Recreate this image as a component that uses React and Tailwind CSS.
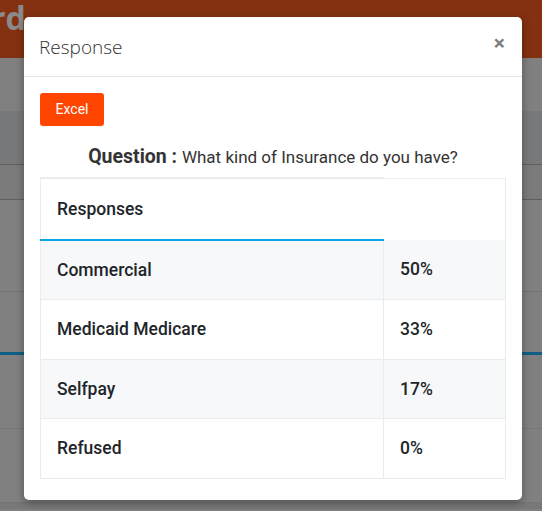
import React from 'react';

const rows = [
    { label: 'Commercial', value: '50%' },
    { label: 'Medicaid Medicare', value: '33%' },
    { label: 'Selfpay', value: '17%' },
    { label: 'Refused', value: '0%' },
];

export default function App() {
    return (
        <div className="relative w-[542px] h-[511px] overflow-hidden bg-[#808080] font-['Roboto',sans-serif]">
            {/* page behind the backdrop */}
            <div className="h-[58px] bg-[#833110] overflow-hidden">
                <div className="-ml-[9px] mt-[2px] text-[32px] font-bold text-[#8a8a8a] leading-none font-['Open_Sans',sans-serif] whitespace-nowrap">rd</div>
            </div>
            <div className="h-[53px]" />
            <div className="h-[54px] bg-[#77787a] border-b border-[#5f5f5f]" />
            <div className="h-[35px] bg-[#7b7b7b] border-b border-[#5f5f5f]" />
            <div className="h-[92px] border-b border-[#747474]" />
            <div className="h-[60px]" />
            <div className="h-[3px] bg-[#0f5f86]" />
            <div className="h-[74px] border-b border-[#777777]" />
            <div className="h-[74px] border-b border-[#747474]" />
            <div className="h-[6px] bg-[#787878]" />

            {/* modal */}
            <div className="absolute left-[24px] top-[17px] w-[498px] h-[483px] bg-white rounded-[5px] shadow-[0_3px_9px_rgba(0,0,0,0.35)]">
                <div className="h-[60px] flex items-center justify-between px-[15px] border-b border-[#e5e5e5]">
                    <h4 className="text-[19px] font-light text-[#333] font-['Open_Sans',sans-serif] pt-[1px]">Response</h4>
                    <button className="text-[21px] font-bold text-[#000] opacity-50 leading-none -mt-[6px] mr-[2px]">×</button>
                </div>

                <div className="px-[16px] pt-[16px]">
                    <button className="h-[33px] w-[64px] rounded-[3px] bg-[#ff4500] text-white text-[14px]">Excel</button>

                    <div className="text-center text-[#333] mt-[18px] leading-[26px]">
                        <span className="text-[19.5px] font-bold">Question : </span>
                        <span className="text-[17px]">What kind of Insurance do you have?</span>
                    </div>

                    <table className="mt-[6px] w-[466px] border border-[#e9ecef] border-collapse text-[17.5px] text-[#212529]">
                        <thead>
                            <tr className="h-[62px]">
                                <th className="w-[343px] text-left font-medium pl-[16px] border-t-2 border-t-[#e9ecef] border-b-2 border-b-[#0aa5e8]">Responses</th>
                                <th className="border-t border-t-[#eeeeee]" />
                            </tr>
                        </thead>
                        <tbody>
                            {rows.map((r, i) => (
                                <tr key={r.label} className={`h-[59.5px] border-b border-[#e9ecef] ${i % 2 === 0 ? 'bg-[#f7f8fa]' : 'bg-white'}`}>
                                    <td className="pl-[16px] font-medium border-r border-[#e9ecef]">{r.label}</td>
                                    <td className="pl-[16px] font-medium">{r.value}</td>
                                </tr>
                            ))}
                        </tbody>
                    </table>
                </div>
            </div>
        </div>
    );
}
